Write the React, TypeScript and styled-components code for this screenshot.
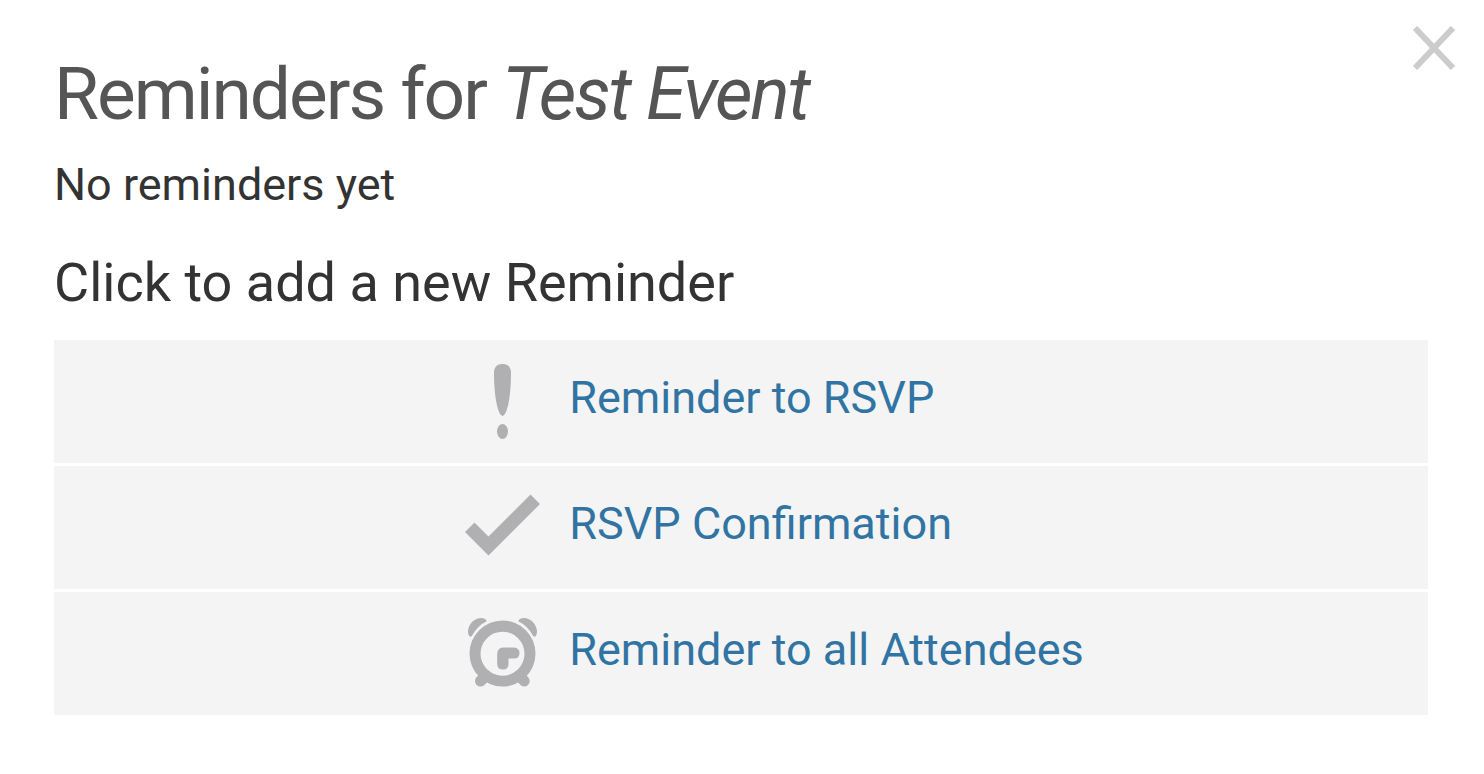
import React from "react";
import styled, { createGlobalStyle } from "styled-components";

const GlobalStyle = createGlobalStyle`
  *, *::before, *::after { box-sizing: border-box; }
  body {
    margin: 0;
    background: #fff;
    color: #333;
    font-family: Roboto, "Liberation Sans", sans-serif;
    font-weight: 400;
  }
`;

const Dialog = styled.main`
  position: relative;
  padding: 54px 56px 56px 54px;
`;

const CloseButton = styled.button`
  position: absolute;
  top: 26px;
  right: 28px;
  display: flex;
  padding: 0;
  border: 0;
  background: none;
  color: #ccc;
  cursor: pointer;
`;

const Title = styled.h1`
  margin: 0;
  font-size: 73px;
  line-height: 80px;
  font-weight: inherit;
  letter-spacing: -2px;
  color: #555;
`;

const Status = styled.p`
  margin: 21px 0 0;
  font-size: 45px;
  line-height: 60px;
`;

const Subtitle = styled.h2`
  margin: 32px 0 0;
  font-size: 54px;
  line-height: 72px;
  font-weight: inherit;
`;

const OptionList = styled.ul`
  display: grid;
  gap: 3px;
  margin: 21px 0 0;
  padding: 0;
  list-style: none;
`;

const OptionLink = styled.a`
  display: grid;
  grid-template-columns: 3fr 5fr;
  padding: 24px 0;
  background: #f4f4f4;
  color: #3174a3;
  text-decoration: none;
`;

const IconCell = styled.span`
  display: flex;
  justify-content: flex-end;
  padding-right: 29px;
  color: #b0b0b2;
`;

const Label = styled.span`
  font-size: 45px;
  line-height: 68px;
`;

const Icon = ({ children }: { children: React.ReactNode }) => (
  <svg width="75" height="75" viewBox="0 0 75 75" fill="currentColor" aria-hidden="true">
    {children}
  </svg>
);

const options = [
  {
    label: "Reminder to RSVP",
    icon: (
      <>
        <path d="M37.5 0C43 0 46 3 46 9C46 26 44 42 40.5 49Q37.5 55 34.5 49C31 42 29 26 29 9C29 3 32 0 37.5 0Z" />
        <ellipse cx="37.5" cy="67.5" rx="5.5" ry="7.5" />
      </>
    ),
  },
  {
    label: "RSVP Confirmation",
    icon: <path d="M0 42 9.5 32.5 23.5 46.5 65.5 4.5 75 14 23.5 65.5Z" />,
  },
  {
    label: "Reminder to all Attendees",
    icon: (
      <>
        <path
          fillRule="evenodd"
          d="M37.5 4.500a33 33 0 1 1 0 66a33 33 0 1 1 0-66ZM37.5 15.700a22 22 0 1 0 0 44a22 22 0 1 0 0-44Z"
        />
        <path d="M4.500 20.300C3 18.500 2.700 16 3.200 13.500C4.500 7 10 2 16 2C18.700 2 21 3.200 21.700 5.200Q12.500 9.500 6.800 20Q5.500 21.200 4.500 20.300Z" />
        <path d="M70.500 20.300C72 18.500 72.300 16 71.800 13.500C70.500 7 65 2 59 2C56.300 2 54 3.200 53.300 5.200Q62.500 9.500 68.200 20Q69.500 21.200 70.500 20.300Z" />
        <path
          d="M15.500 65 21 59.500M59.200 65 54 59.500"
          fill="none"
          stroke="currentColor"
          strokeWidth="11"
          strokeLinecap="round"
        />
        <path d="M32.200 38Q32.200 31.500 38.500 31.500H49Q54.500 32 54.500 37Q54.500 42.500 49 42.500H43.500V48Q43.500 53.500 38 53.500Q32.200 53.500 32.200 48Z" />
      </>
    ),
  },
];

export default function App() {
  return (
    <>
      <GlobalStyle />
      <Dialog>
        <Title>
          Reminders for <em>Test Event</em>
        </Title>
        <CloseButton type="button" aria-label="Close">
          <svg width="44" height="44" viewBox="0 0 44 44" fill="none" stroke="currentColor" strokeWidth="6">
            <path d="M3 2 41 42M41 2 3 42" />
          </svg>
        </CloseButton>
        <Status>No reminders yet</Status>
        <Subtitle>Click to add a new Reminder</Subtitle>
        <OptionList>
          {options.map(({ label, icon }) => (
            <li key={label}>
              <OptionLink href="#">
                <IconCell>
                  <Icon>{icon}</Icon>
                </IconCell>
                <Label>{label}</Label>
              </OptionLink>
            </li>
          ))}
        </OptionList>
      </Dialog>
    </>
  );
}
